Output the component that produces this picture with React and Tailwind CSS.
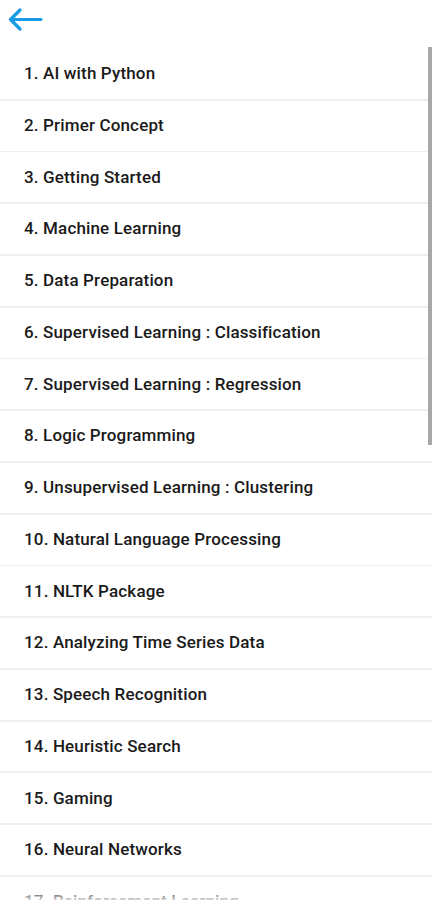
import React from "react";

const topics = [
  "AI with Python",
  "Primer Concept",
  "Getting Started",
  "Machine Learning",
  "Data Preparation",
  "Supervised Learning : Classification",
  "Supervised Learning : Regression",
  "Logic Programming",
  "Unsupervised Learning : Clustering",
  "Natural Language Processing",
  "NLTK Package",
  "Analyzing Time Series Data",
  "Speech Recognition",
  "Heuristic Search",
  "Gaming",
  "Neural Networks",
  "Reinforcement Learning",
  "Genetic Algorithm",
];

export default function App() {
  return (
    <div className="relative h-[900px] w-[432px] overflow-hidden bg-white" style={{ fontFamily: "Roboto, 'Noto Sans', sans-serif" }}>
      <div className="flex h-[49px] items-start pl-[7px] pt-[8px]">
        <svg width="36" height="24" viewBox="0 0 36 24" fill="none">
          <path d="M34 11.5H4M13 2L3.5 11.5L13 21" stroke="#1a9be6" strokeWidth="3.2" strokeLinecap="round" strokeLinejoin="round" />
        </svg>
      </div>

      <div className="flex flex-col gap-[1.8px] bg-[#efefef]">
        {topics.map((t, i) => (
          <div key={i} className="flex h-[49.95px] shrink-0 items-center bg-white pl-[24px] text-[17px] font-medium tracking-[0.15px] text-[#1a1a1a]">
            {i + 1}. {t}
          </div>
        ))}
      </div>

      <div className="absolute right-0 top-[47px] h-[398px] w-[4px] bg-[#a8a8a8]" />
      <div className="pointer-events-none absolute bottom-0 left-0 h-[12px] w-full bg-gradient-to-b from-white/0 to-white/80" />
    </div>
  );
}
